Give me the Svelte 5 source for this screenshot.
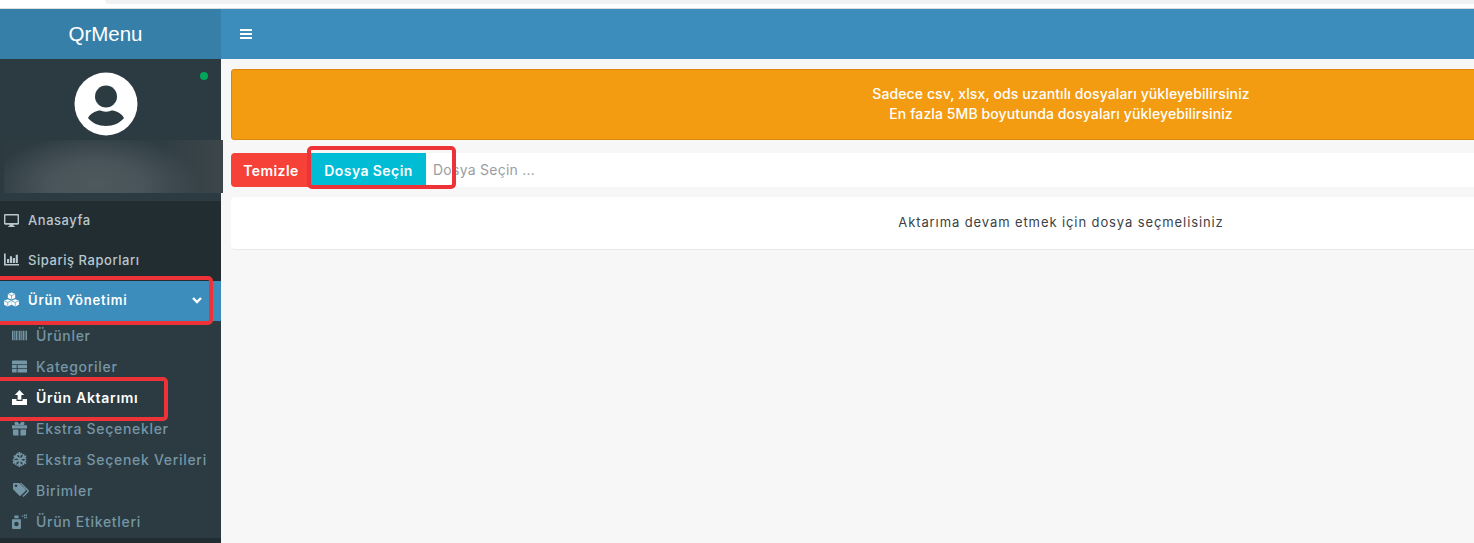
<script>
  const subs = [
    { id: 'barcode', label: 'Ürünler' },
    { id: 'th', label: 'Kategoriler' },
    { id: 'upload', label: 'Ürün Aktarımı', active: true },
    { id: 'gift', label: 'Ekstra Seçenekler' },
    { id: 'snow', label: 'Ekstra Seçenek Verileri' },
    { id: 'tags', label: 'Birimler' },
    { id: 'spray', label: 'Ürün Etiketleri' }
  ];
</script>

{#snippet icon(id)}
  <svg class="ico ico-{id}" viewBox="0 0 16 16" fill="currentColor" aria-hidden="true">
    {#if id === 'desktop'}
      <path d="M1.300 1h13.400c.7 0 1.300.6 1.300 1.300v8.900c0 .7-.6 1.300-1.300 1.300H10l.4 1.500h1.400V15H4.200v-1h1.400l.4-1.500H1.300C.6 12.500 0 11.900 0 11.200V2.300C0 1.600.6 1 1.300 1zM1.500 2.600v8h13v-8z" fill-rule="evenodd" />
    {:else if id === 'chart'}
      <path d="M0 1.500h1.800v11.200H16v1.800H0zM3.200 7.500h2.300v4.200H3.200zM6.300 4.500h2.300v7.200H6.300zM9.400 6.500h2.300v5.200H9.400zM12.500 3h2.300v8.700h-2.300z" />
    {:else if id === 'cubes'}
      <path d="M8 .5l3.900 1.600v4.300L8 8 4.100 6.400V2.100zM4 7.800l3.900 1.600v4.300L4 15.500.1 13.700V9.400zM12 7.800l3.900 1.600v4.300L12 15.500l-3.900-1.800V9.400z" />
      <path d="M4.600 2.400L8 3.800l3.400-1.400M8 3.800V7.500M.6 9.700L4 11.100l3.400-1.400M4 11.100v3.700M8.600 9.700l3.400 1.400 3.400-1.400M12 11.100v3.700" fill="none" stroke="#3c8dbc" stroke-width=".7" />
    {:else if id === 'barcode'}
      <path d="M0 3h1.600v10H0zM2.300 3h.8v10h-.8zM3.800 3h1.600v10H3.800zM6 3h.8v10H6zM7.500 3h1.600v10H7.500zM9.800 3h.8v10h-.8zM11.300 3h1.600v10h-1.600zM13.500 3h.8v10h-.8zM14.800 3H16v10h-1.200z" />
    {:else if id === 'th'}
      <path d="M0 2.800C0 2 .5 1.500 1.200 1.500h13.600c.7 0 1.200.5 1.200 1.300V5.500H0zM0 6.500h5v3H0zM6 6.500h10v3H6zM0 10.500h5v4H1.200C.5 14.500 0 14 0 13.200zM6 10.500h10v2.700c0 .8-.5 1.300-1.200 1.300H6z" />
    {:else if id === 'upload'}
      <path d="M8 0l5 5.200H10v5.300H6V5.200H3zM0 9.500h4.800v2.300h6.400V9.500H16V16H0z" />
    {:else if id === 'gift'}
      <path d="M0 4.500h16V8H0zM1 9h6v6.500H2c-.6 0-1-.4-1-1zM9 9h6v5.500c0 .6-.4 1-1 1H9zM4.500 .8c1.500 0 2.700 1.300 3.500 3.200C8.800 2.100 10 .8 11.500 .8 13.500 .8 14 3.200 12.500 4.300h-9C2 3.200 2.500 .8 4.500 .8z" />
    {:else if id === 'snow'}
      <path d="M7 0h2v2l1.500-1.200 1 1.300L9 4v2.300l2-1.100.5-3 1.600.3-.3 1.800 1.700-1 1 1.700-1.700 1 1.700.7-.6 1.500-3-1.100-2 1.100 2 1.100 3-1.100.6 1.500-1.700.7 1.700 1-1 1.700-1.700-1 .3 1.800-1.600.3-.5-3-2-1.100V12l2.500 1.900-1 1.300L9 14v2H7v-2l-1.500 1.200-1-1.300L7 12V9.700l-2 1.100-.5 3-1.600-.3.3-1.800-1.700 1-1-1.700 1.700-1-1.700-.7.6-1.500 3 1.100L7 8l-2-1.100-3 1.100-.6-1.500 1.700-.7-1.700-1 1-1.700 1.700 1-.3-1.800 1.600-.3.5 3 2 1.100V4L4.500 2.100l1-1.300L7 2z" />
    {:else if id === 'tags'}
      <path d="M0 2.200C0 1.500.5 1 1.200 1h5l6.300 6.300c.5.5.5 1.200 0 1.700l-4.600 4.600c-.5.5-1.200.5-1.700 0L0 7.200zM3 5a1.300 1.300 0 100-2.600A1.300 1.300 0 003 5zM8.500 1l6.800 6.800c.9.9.9 1.500 0 2.400l-4.800 4.800-1-1 4.500-4.500c.3-.3.3-.6 0-.9L7 1z" fill-rule="evenodd" />
    {:else if id === 'spray'}
      <path d="M2.500 1.500h4.500v3H2.500zM0 5.500h9.500V15c0 .5-.4 1-1 1H1c-.6 0-1-.5-1-1zM4.700 8.300a2.400 2.400 0 100 4.800 2.400 2.400 0 000-4.800zM10.500 1.500H12V3h-1.500zM12.800 .5h1.400v1.500h-1.400zM12.800 3h1.400v1.500h-1.400zM14.800 .5H16V2h-1.200zM14.800 3H16v1.500h-1.200z" fill-rule="evenodd" />
    {/if}
  </svg>
{/snippet}

<div class="page">
  <div class="chrome"><span class="tabshape"></span></div>
  <div class="shell">
    <aside class="sidebar">
      <div class="brand">QrMenu</div>
      <div class="user">
        <svg class="avatar" viewBox="0 0 64 64" aria-hidden="true">
          <circle cx="32" cy="32" r="31.500" fill="#fff" />
          <circle cx="32" cy="24.500" r="11" fill="#2c3b41" />
          <path d="M14 46c3-5.500 9-7.500 12-7.500 2 0 3 1.300 6 1.300s4-1.300 6-1.300c3 0 9 2 12 7.500-4 5-10.500 8-18 8s-14-3-18-8z" fill="#2c3b41" />
        </svg>
        <span class="dot"></span>
        <div class="blur"></div>
      </div>
      <nav class="nav">
        <a class="top" href="#a">{@render icon('desktop')}<span>Anasayfa</span></a>
        <a class="top" href="#a">{@render icon('chart')}<span>Sipariş Raporları</span></a>
        <a class="top current" href="#a">
          {@render icon('cubes')}<span>Ürün Yönetimi</span>
          <svg class="chev" viewBox="0 0 12 12" aria-hidden="true"><path d="M2 4l4 4 4-4" fill="none" stroke="currentColor" stroke-width="2.400" /></svg>
        </a>
        <div class="sub">
          {#each subs as s}
            <a class:active={s.active} href="#a">{@render icon(s.id)}<span>{s.label}</span></a>
          {/each}
        </div>
      </nav>
      <span class="mark mark-nav"></span>
      <span class="mark mark-sub"></span>
    </aside>

    <div class="main">
      <header class="bar">
        <svg class="burger" viewBox="0 0 12 10" aria-hidden="true"><path d="M0 0h12v2H0zM0 4h12v2H0zM0 8h12v2H0z" fill="#fff" /></svg>
      </header>
      <div class="content">
        <div class="alert">
          <p>Sadece csv, xlsx, ods uzantılı dosyaları yükleyebilirsiniz</p>
          <p>En fazla 5MB boyutunda dosyaları yükleyebilirsiniz</p>
        </div>
        <div class="file">
          <button class="clear">Temizle</button>
          <button class="pick">Dosya Seçin</button>
          <span class="ph">Dosya Seçin ...</span>
          <span class="mark mark-file"></span>
        </div>
        <div class="card">Aktarıma devam etmek için dosya seçmelisiniz</div>
      </div>
    </div>
  </div>
</div>

<style>
  :global(body) { margin: 0; overflow: hidden; background: #f7f7f7; }
  .page {
    width: 1474px; height: 543px; overflow: hidden;
    font-family: Inter, "Noto Sans", sans-serif;
    display: flex; flex-direction: column;
    background: #f7f7f7;
  }
  .chrome { height: 8px; background: #fff; border-bottom: 1px solid #dcdcdc; flex: none; }
  .tabshape {
    display: block; height: 4px; margin-left: 105px;
    background: #f0f1f3; border-bottom-left-radius: 8px;
  }
  .shell { display: flex; flex: 1; min-height: 0; }
  .sidebar { width: 221px; flex: none; background: #222d32; position: relative; }
  .brand {
    height: 50px; background: #367fa9; color: #fff; padding-right: 10px; box-sizing: border-box;
    font: 20.500px/50px "Liberation Sans", sans-serif; text-align: center;
  }
  .user { height: 142px; background: #2c3b41; position: relative; padding-top: 14px; box-sizing: border-box; }
  .avatar { display: block; width: 64px; height: 64px; margin: -1px 0 0 74px; }
  .dot {
    position: absolute; left: 200px; top: 13px; width: 8px; height: 8px;
    border-radius: 50%; background: #00a65a;
  }
  .blur {
    position: absolute; left: 4px; top: 81px; width: 219px; height: 53px;
    background:
      radial-gradient(ellipse 105px 52px at 42% 85%, #4e595e 0%, #49545a 45%, rgba(60,72,78,0) 100%),
      linear-gradient(90deg, #2e3c42 0%, #2f3d43 70%, #3c464b 100%);
  }
  .nav a { display: flex; align-items: center; text-decoration: none; box-sizing: border-box; padding-bottom: 2px; }
  .top {
    height: 39.500px; padding-left: 4px; color: #b8c7ce;
    font-size: 13px; font-weight: 500; letter-spacing: .55px;
    position: relative;
  }
  .nav a.top:first-child { height: 40px; }
  .top .ico { width: 15px; height: 15px; margin-right: 9px; }
  .top.current { background: #3c8dbc; color: #fff; font-weight: 600; height: 40px; letter-spacing: .85px; }
  .chev { width: 12px; height: 12px; position: absolute; right: 18px; top: 13px; color: #fff; }
  .sub { background: #2c3b41; height: 217px; box-sizing: border-box; }
  .nav .sub a {
    height: 31px; padding-left: 12px; color: #7596a6;
    font-size: 14px; font-weight: 500; letter-spacing: .7px;
  }
  .sub .ico { width: 15px; height: 15px; margin-right: 9px; }
  .sub .ico-tags { width: 18px; height: 16px; margin-right: 6px; }
  .nav .sub a.active { color: #fff; font-weight: 600; }
  .main { flex: 1; min-width: 0; display: flex; flex-direction: column; }
  .bar { height: 50px; background: #3c8dbc; display: flex; align-items: center; padding-left: 19px; flex: none; }
  .burger { width: 12px; height: 10px; }
  .content { padding: 10px 0 0 10px; width: 1670px; box-sizing: border-box; }
  .alert {
    height: 71px; box-sizing: border-box; background: #f39c12; border: 1px solid #d9870f;
    border-radius: 3px; color: #fff;
    font-size: 14px; font-weight: 500; line-height: 20px; text-align: center;
    padding-top: 14px; letter-spacing: .1px;
  }
  .alert p { margin: 0; }
  .file {
    margin-top: 13px; height: 34px; background: #fff; display: flex; align-items: stretch;
    border-radius: 4px; position: relative; font-size: 14px; letter-spacing: .25px;
  }
  button {
    border: 0; padding: 0; color: #fff; font: inherit; font-weight: 600; letter-spacing: .42px;
  }
  .clear { width: 80px; background: #f64139; border-radius: 4px 0 0 4px; }
  .pick { width: 115px; background: #00bcd4; }
  .ph { color: #9a9ea3; line-height: 34px; padding-left: 7px; font-weight: 400; }
  .mark {
    position: absolute; box-sizing: border-box; border: 4px solid #ee3338; pointer-events: none;
  }
  .mark-file { left: 76px; top: -7px; width: 149px; height: 43px; border-radius: 5px; }
  .mark-nav { left: -8px; top: 267px; width: 221px; height: 49px; border-radius: 5px; }
  .mark-sub { left: -8px; top: 368px; width: 176px; height: 44px; border-radius: 5px; }
  .card {
    margin-top: 10px; height: 53px; background: #fff; border-bottom: 1px solid #e9e9e9;
    border-radius: 4px; box-sizing: border-box;
    display: flex; align-items: center; justify-content: center;
    color: #3c3f45; font-size: 13px; letter-spacing: .9px;
    padding-bottom: 2px;
  }
</style>
